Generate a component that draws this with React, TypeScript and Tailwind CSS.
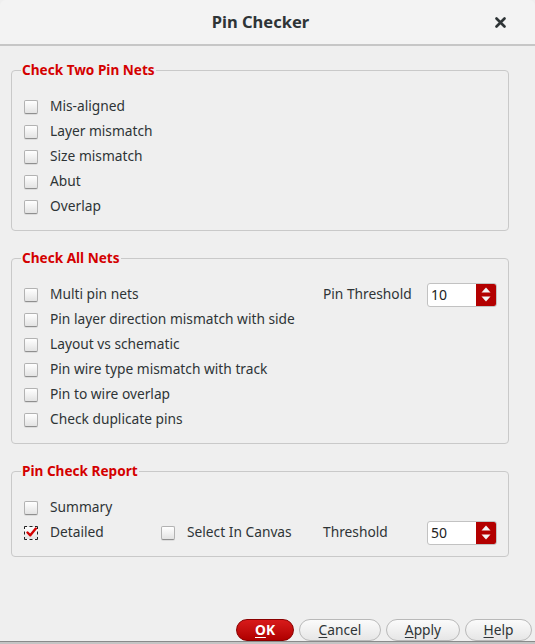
import React from "react";

const font = { fontFamily: '"Noto Sans", "Open Sans", sans-serif' };

function CheckBox({ checked = false }: { checked?: boolean }) {
  if (checked) {
    return (
      <span className="flex h-[14px] w-[14px] shrink-0 items-center justify-center rounded-[1px] border border-dashed border-[#222] bg-gradient-to-b from-[#ffffff] to-[#e2e2e2]">
        <svg width="11" height="11" viewBox="0 0 11 11">
          <path d="M1.5 5.5 L4.3 8.3 L9.8 1.6" fill="none" stroke="#d40000" strokeWidth="2.4" strokeLinecap="round" strokeLinejoin="round" />
        </svg>
      </span>
    );
  }
  return (
    <span className="block h-[14px] w-[14px] shrink-0 rounded-[2px] border border-[#b2b2b2] border-b-[#8f8f8f] bg-gradient-to-b from-[#ffffff] to-[#e3e3e3] shadow-[0_1px_0_rgba(0,0,0,0.08)]" />
  );
}

function Check({ label, checked, className = "" }: { label: string; checked?: boolean; className?: string }) {
  return (
    <div className={`flex h-[25px] items-center gap-[12px] ${className}`}>
      <CheckBox checked={checked} />
      <span>{label}</span>
    </div>
  );
}

function Spin({ value }: { value: string }) {
  return (
    <div className="flex h-[24px] w-[70px] overflow-hidden rounded-[3px] border border-[#c2c2c2] bg-white">
      <div className="flex flex-1 items-center pl-[3px] text-[14px] text-[#222]">{value}</div>
      <div className="flex w-[20px] flex-col items-center justify-center gap-[3px] bg-[#b30000]">
        <svg width="10" height="6" viewBox="0 0 10 6">
          <path d="M0.5 5.5 L5 0.5 L9.5 5.5 Z" fill="#f4f4f4" />
        </svg>
        <svg width="10" height="6" viewBox="0 0 10 6">
          <path d="M0.5 0.5 L5 5.5 L9.5 0.5 Z" fill="#f4f4f4" />
        </svg>
      </div>
    </div>
  );
}

function Group({ title, children, className = "" }: { title: string; children: React.ReactNode; className?: string }) {
  return (
    <fieldset className={`ml-[11px] w-[498px] rounded-[4px] border border-[#c9c9c9] pt-[15px] pb-[11px] ${className}`}>
      <legend className="ml-[9px] px-[1px] text-[13.6px] leading-[18px] font-bold text-[#d40000]">{title}</legend>
      <div className="flex flex-col pl-[12px]">{children}</div>
    </fieldset>
  );
}

function Button({ label, u, primary = false, width }: { label: string; u: string; primary?: boolean; width: string }) {
  const rest = label.slice(1);
  return (
    <button
      className={`flex h-[22px] items-center justify-center rounded-full border text-[13.75px] ${width} ${
        primary
          ? "border-[#8a0000] bg-gradient-to-b from-[#d81a1a] to-[#b00000] font-bold text-white"
          : "border-[#b9b9b9] bg-gradient-to-b from-[#fbfbfb] to-[#e6e6e6] text-[#2e3436]"
      }`}
    >
      <span className="underline underline-offset-2">{u}</span>
      {rest}
    </button>
  );
}

export default function App() {
  return (
    <div className="flex h-[644px] w-[535px] flex-col overflow-hidden bg-[#efefef] text-[13.75px] text-[#2e3436]" style={font}>
      <div className="relative flex h-[46px] shrink-0 items-center justify-center rounded-t-[6px] border-b-2 border-[#c6c6c6] bg-[#f3f3f3] pr-[14px]">
        <span className="text-[16.5px] font-bold text-[#2e3436]">Pin Checker</span>
        <svg className="absolute right-[29px] top-[17px]" width="11" height="11" viewBox="0 0 11 11">
          <path d="M1.5 1.5 L9.5 9.5 M9.5 1.5 L1.5 9.5" stroke="#2e3436" strokeWidth="2.6" strokeLinecap="round" />
        </svg>
      </div>

      <div className="flex flex-1 flex-col">
        <Group title="Check Two Pin Nets" className="mt-[15px]">
          <Check label="Mis-aligned" />
          <Check label="Layer mismatch" />
          <Check label="Size mismatch" />
          <Check label="Abut" />
          <Check label="Overlap" />
        </Group>

        <Group title="Check All Nets" className="mt-[18px]">
          <div className="flex h-[25px] items-center">
            <Check label="Multi pin nets" className="w-[299px]" />
            <span className="w-[104px]">Pin Threshold</span>
            <Spin value="10" />
          </div>
          <Check label="Pin layer direction mismatch with side" />
          <Check label="Layout vs schematic" />
          <Check label="Pin wire type mismatch with track" />
          <Check label="Pin to wire overlap" />
          <Check label="Check duplicate pins" />
        </Group>

        <Group title="Pin Check Report" className="mt-[18px]">
          <Check label="Summary" />
          <div className="flex h-[25px] items-center">
            <Check label="Detailed" checked className="w-[137px]" />
            <Check label="Select In Canvas" className="w-[162px]" />
            <span className="w-[104px]">Threshold</span>
            <Spin value="50" />
          </div>
        </Group>

        <div className="mt-auto flex justify-end gap-[5px] pr-[3px]">
          <Button label="OK" u="O" primary width="w-[58px]" />
          <Button label="Cancel" u="C" width="w-[82px]" />
          <Button label="Apply" u="A" width="w-[74px]" />
          <Button label="Help" u="H" width="w-[67px]" />
        </div>
      </div>

      <div className="h-[3px] shrink-0 border-t border-[#8a8a8a] bg-[#c4c4c4]" />
    </div>
  );
}
